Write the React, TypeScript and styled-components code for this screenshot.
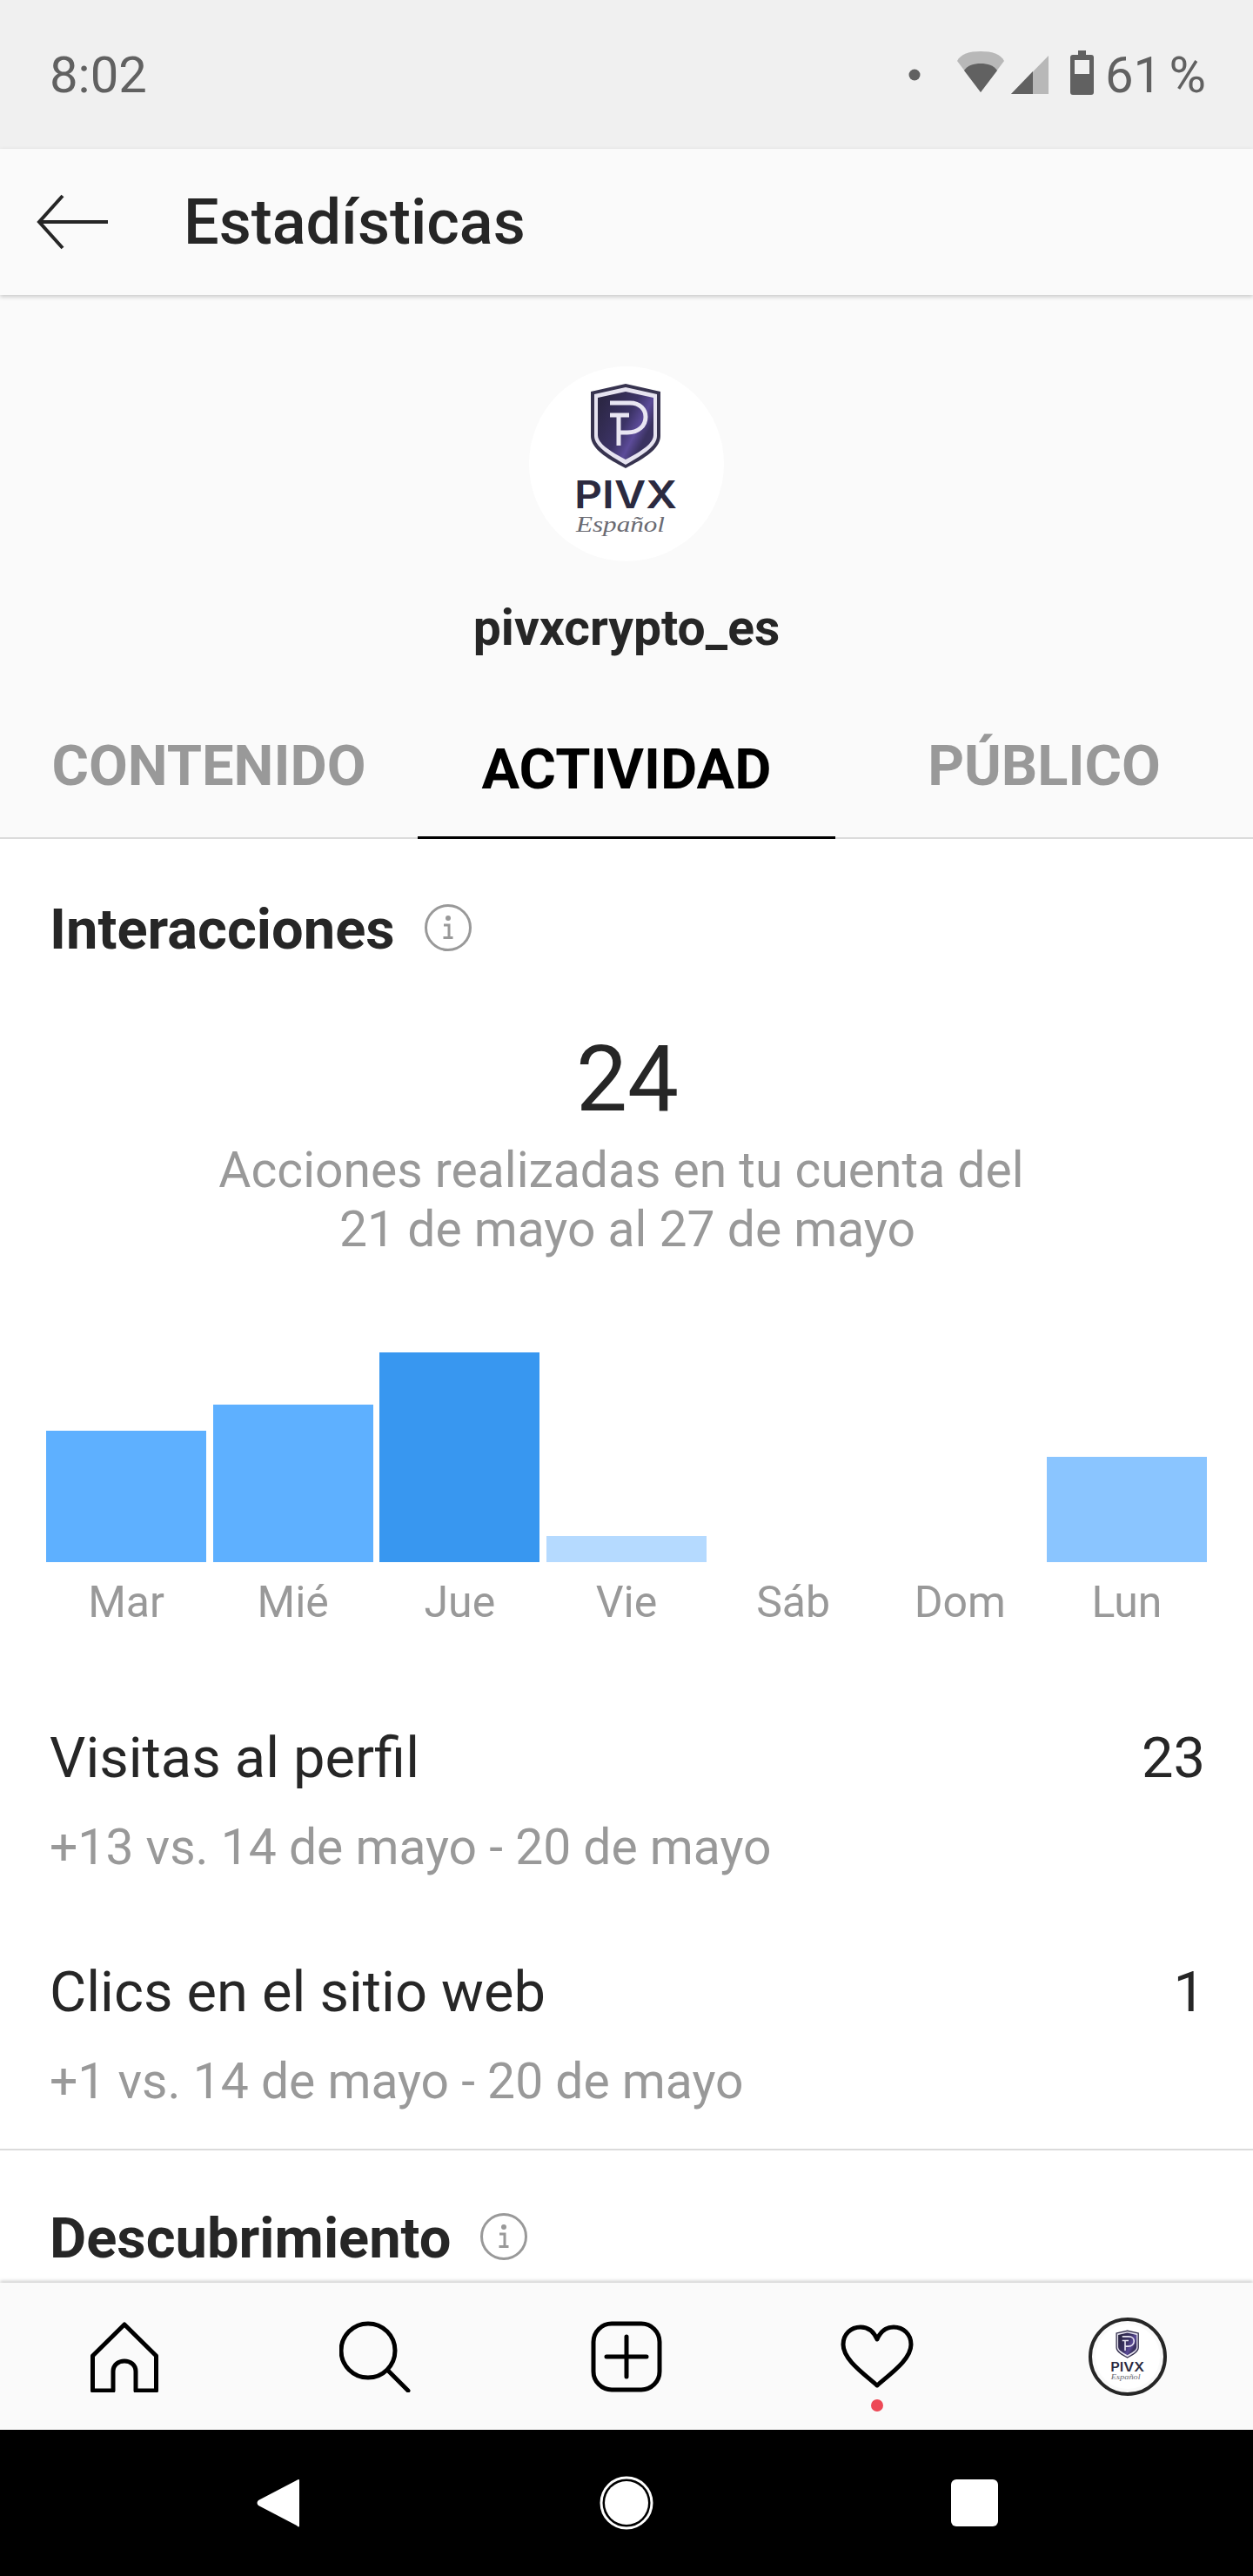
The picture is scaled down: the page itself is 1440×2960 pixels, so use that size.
import styled, { createGlobalStyle } from "styled-components";

const GlobalStyle = createGlobalStyle`
  html, body {
    margin: 0;
    padding: 0;
    background: #fff;
  }
  * {
    box-sizing: border-box;
  }
`;

const Screen = styled.div`
  width: 1440px;
  height: 2960px;
  display: flex;
  flex-direction: column;
  overflow: hidden;
  font-family: Roboto, "Liberation Sans", sans-serif;
  color: #262626;
`;

const StatusBar = styled.div`
  height: 171px;
  flex: none;
  background: #f0f0f0;
  display: flex;
  align-items: center;
  justify-content: space-between;
  padding: 0 54px 0 57px;
  color: #616161;
  font-size: 58px;
`;

const StatusRight = styled.div`
  display: flex;
  align-items: center;
  gap: 11px;
  word-spacing: -6px;
`;

const Toolbar = styled.div`
  height: 168px;
  flex: none;
  background: #fafafa;
  display: flex;
  align-items: center;
  padding-left: 42px;
  gap: 86px;
  box-shadow: 0 2px 5px rgba(0, 0, 0, 0.2);
  position: relative;
  font-size: 72px;
  font-weight: 500;
`;

const Body = styled.div`
  flex: 1;
  min-height: 0;
  overflow: hidden;
`;

const Profile = styled.div`
  background: #fafafa;
  border-bottom: 2px solid #dbdbdb;
  display: flex;
  flex-direction: column;
  align-items: center;
  padding-top: 82px;
`;

const Avatar = styled.div`
  width: 224px;
  height: 224px;
  border-radius: 50%;
  background: #fff;
  overflow: hidden;
`;

const Username = styled.div`
  font-size: 57px;
  font-weight: 700;
  line-height: 66px;
  margin-top: 44px;
`;

const Tabs = styled.div`
  align-self: stretch;
  display: grid;
  grid-template-columns: repeat(3, 480px);
  margin-top: 73px;
  margin-bottom: -2px;
`;

const Tab = styled.div<{ $active?: boolean }>`
  height: 136px;
  display: flex;
  justify-content: center;
  padding-top: ${(p) => (p.$active ? 19 : 15)}px;
  font-size: 65px;
  line-height: 75px;
  font-weight: 700;
  color: ${(p) => (p.$active ? "#000" : "#999")};
  border-bottom: 3px solid ${(p) => (p.$active ? "#000" : "transparent")};
`;

const Section = styled.div<{ $bottom?: number }>`
  background: #fff;
  padding: 0 55px ${(p) => p.$bottom ?? 0}px 57px;
`;

const SectionHead = styled.div<{ $top: number }>`
  display: flex;
  align-items: center;
  gap: 33px;
  padding-top: ${(p) => p.$top}px;
  font-size: 65px;
  line-height: 72px;
  font-weight: 700;

  svg {
    margin-top: -4px;
  }
`;

const Total = styled.div`
  margin-top: 78px;
  text-align: center;
  font-size: 105px;
  line-height: 117px;
`;

const Caption = styled.div`
  margin-top: 12px;
  text-align: center;
  font-size: 57px;
  line-height: 68px;
  color: #999;
`;

const Chart = styled.div`
  margin: 107px -2px 0 -4px;
  display: grid;
  grid-template-columns: repeat(7, 1fr);
  column-gap: 7.6px;
`;

const BarSlot = styled.div`
  height: 241px;
  display: flex;
  align-items: flex-end;
`;

const Bar = styled.div<{ $height: number; $color: string }>`
  width: 100%;
  height: ${(p) => p.$height}px;
  background: ${(p) => p.$color};
`;

const DayLabel = styled.div`
  margin-top: 18px;
  text-align: center;
  font-size: 50px;
  line-height: 56px;
  color: #999;
`;

const StatRows = styled.div`
  margin-top: 115px;
`;

const StatBlock = styled.div`
  & + & {
    margin-top: 97px;
  }
`;

const StatRow = styled.div`
  display: flex;
  justify-content: space-between;
  font-size: 65px;
  line-height: 72px;
  color: #262626;
`;

const StatNote = styled.div`
  margin-top: 34px;
  font-size: 57px;
  line-height: 66px;
  color: #999;
`;

const Divider = styled.div`
  height: 2px;
  background: #dbdbdb;
`;

const BottomNav = styled.div`
  height: 169px;
  flex: none;
  background: #fafafa;
  position: relative;
  box-shadow: 0 -2px 4px rgba(0, 0, 0, 0.2);
  display: grid;
  grid-template-columns: 286px 289px 289px 288px 288px;
  align-items: center;
  justify-items: center;
`;

const NavItem = styled.div`
  position: relative;
  display: flex;
  align-items: center;
  justify-content: center;
`;

const RedDot = styled.span`
  position: absolute;
  left: 50%;
  bottom: -26px;
  width: 14px;
  height: 14px;
  margin-left: -7px;
  border-radius: 50%;
  background: #ed4956;
`;

const NavAvatar = styled.div`
  width: 90px;
  height: 90px;
  border-radius: 50%;
  border: 4px solid #262626;
  padding: 4px;
  background: #fafafa;
`;

const NavAvatarInner = styled.div`
  width: 100%;
  height: 100%;
  border-radius: 50%;
  background: #fff;
  overflow: hidden;
`;

const SystemBar = styled.div`
  height: 168px;
  flex: none;
  background: #000;
  display: grid;
  grid-template-columns: repeat(3, 400px);
  justify-content: center;
  align-items: center;
  justify-items: center;
`;

const SysSquare = styled.div`
  width: 54px;
  height: 54px;
  border-radius: 6px;
  background: #fff;
`;

const Logo = () => (
  <svg width="100%" height="100%" viewBox="0 0 224 224" style={{ display: "block" }}>
    <defs>
      <linearGradient id="shieldFill" x1="0.1" y1="0.1" x2="0.9" y2="0.6">
        <stop offset="0" stopColor="#2c2745" />
        <stop offset="0.55" stopColor="#3c3366" />
        <stop offset="0.8" stopColor="#5c4b99" />
        <stop offset="1" stopColor="#3a3260" />
      </linearGradient>
    </defs>
    <path d="M111 20 L151 29 V80 C151 96 128 108 111 117 C94 108 71 96 71 80 V29 Z" fill="#37334f" />
    <path d="M111 24 L147 32 V80 C147 93 126 104 111 113 C96 104 75 93 75 80 V32 Z" fill="#e6e3f0" />
    <path d="M111 29 L143 36 V79 C143 90 124 100 111 107 C98 100 79 90 79 79 V36 Z" fill="url(#shieldFill)" />
    <path
      d="M93 42 H116 C128 42 134 50 134 58 C134 68 126 76 113 76 H103 M103 58 V91 M93 56 H115"
      fill="none"
      stroke="#e9e6f2"
      strokeWidth="5"
    />
    <text
      x="52"
      y="163"
      fontFamily="Inter, sans-serif"
      fontWeight="600"
      fontSize="44"
      textLength="118"
      lengthAdjust="spacingAndGlyphs"
      fill="#2b2a40"
    >
      PIVX
    </text>
    <text
      x="54"
      y="190"
      fontFamily="'Liberation Serif', serif"
      fontStyle="italic"
      fontSize="26"
      textLength="102"
      lengthAdjust="spacingAndGlyphs"
      fill="#6a6a72"
    >
      Español
    </text>
  </svg>
);

const InfoIcon = () => (
  <svg width="56" height="56" viewBox="0 0 56 56">
    <circle cx="28" cy="28" r="25.5" fill="none" stroke="#999" strokeWidth="3" />
    <circle cx="28" cy="17" r="3" fill="#999" />
    <path d="M23 25 H29 V39 M22.5 39.5 H33.5" fill="none" stroke="#999" strokeWidth="3" />
  </svg>
);

const bars = [
  { day: "Mar", height: 151, color: "#5eb0ff" },
  { day: "Mié", height: 181, color: "#5eb0ff" },
  { day: "Jue", height: 241, color: "#3897f0" },
  { day: "Vie", height: 30, color: "#b5daff" },
  { day: "Sáb", height: 0, color: "transparent" },
  { day: "Dom", height: 0, color: "transparent" },
  { day: "Lun", height: 121, color: "#8ac5ff" },
];

export default function App() {
  return (
    <>
      <GlobalStyle />
      <Screen>
        <StatusBar>
          <span>8:02</span>
          <StatusRight>
            <svg width="215" height="60" viewBox="0 0 215 60">
              <circle cx="7" cy="30" r="6.5" fill="#616161" />
              <path d="M56 14 C60 6 70 3 83 3 C96 3 106 6 110 14 L83 50 Z" fill="#b8b8b8" />
              <path d="M64 25 C68 19 75 17 83 17 C91 17 98 19 102 25 L83 50 Z" fill="#616161" />
              <path d="M118 52 L161 8 V52 Z" fill="#b8b8b8" />
              <path d="M118 52 L143 26 V52 Z" fill="#616161" />
              <path d="M195 2 H204 V7 H210 Q213 7 213 10 V50 Q213 53 210 53 H189 Q186 53 186 50 V10 Q186 7 189 7 H195 Z" fill="#616161" />
              <rect x="191" y="13" width="17" height="16" fill="#f0f0f0" />
            </svg>
            <span>61 %</span>
          </StatusRight>
        </StatusBar>
        <Toolbar>
          <svg width="83" height="64" viewBox="0 0 83 64">
            <path d="M30 2 L3 32 L30 62 M3 32 H82" fill="none" stroke="#262626" strokeWidth="4" />
          </svg>
          <span>Estadísticas</span>
        </Toolbar>
        <Body>
          <Profile>
            <Avatar>
              <Logo />
            </Avatar>
            <Username>pivxcrypto_es</Username>
            <Tabs>
              <Tab>CONTENIDO</Tab>
              <Tab $active>ACTIVIDAD</Tab>
              <Tab>PÚBLICO</Tab>
            </Tabs>
          </Profile>
          <Section $bottom={44}>
            <SectionHead $top={68}>
              Interacciones
              <InfoIcon />
            </SectionHead>
            <Total>24</Total>
            <Caption>
              Acciones realizadas en tu cuenta del{"\u00a0"}
              <br />
              21 de mayo al 27 de mayo
            </Caption>
            <Chart>
              {bars.map((b) => (
                <BarSlot key={b.day}>
                  <Bar $height={b.height} $color={b.color} />
                </BarSlot>
              ))}
              {bars.map((b) => (
                <DayLabel key={b.day}>{b.day}</DayLabel>
              ))}
            </Chart>
            <StatRows>
              <StatBlock>
                <StatRow>
                  <span>Visitas al perfil</span>
                  <span>23</span>
                </StatRow>
                <StatNote>+13 vs. 14 de mayo - 20 de mayo</StatNote>
              </StatBlock>
              <StatBlock>
                <StatRow>
                  <span>Clics en el sitio web</span>
                  <span>1</span>
                </StatRow>
                <StatNote>+1 vs. 14 de mayo - 20 de mayo</StatNote>
              </StatBlock>
            </StatRows>
          </Section>
          <Divider />
          <Section>
            <SectionHead $top={65}>
              Descubrimiento
              <InfoIcon />
            </SectionHead>
          </Section>
        </Body>
        <BottomNav>
          <NavItem>
            <svg width="78" height="82" viewBox="0 0 78 82">
              <path d="M2.5 80 V40 L39 4 L75.5 40 V80 H52 V58 C52 42 26 42 26 58 V80 Z" fill="none" stroke="#000" strokeWidth="5" strokeLinejoin="round" />
            </svg>
          </NavItem>
          <NavItem>
            <svg width="82" height="82" viewBox="0 0 82 82">
              <circle cx="33" cy="34" r="31" fill="none" stroke="#000" strokeWidth="5" />
              <path d="M56 57 L79 80" stroke="#000" strokeWidth="5" strokeLinecap="round" />
            </svg>
          </NavItem>
          <NavItem>
            <svg width="82" height="82" viewBox="0 0 82 82">
              <rect x="3" y="3" width="76" height="76" rx="21" fill="none" stroke="#000" strokeWidth="5" />
              <path d="M41 18 V64 M18 41 H64" stroke="#000" strokeWidth="5" strokeLinecap="round" />
            </svg>
          </NavItem>
          <NavItem>
            <svg width="84" height="74" viewBox="0 0 84 74">
              <path d="M42 70 C26 56 3 40 3 23 C3 11 12 3 23 3 C32 3 38 8 42 17 C46 8 52 3 61 3 C72 3 81 11 81 23 C81 40 58 56 42 70 Z" fill="none" stroke="#000" strokeWidth="5" strokeLinejoin="round" />
            </svg>
            <RedDot />
          </NavItem>
          <NavItem>
            <NavAvatar>
              <NavAvatarInner>
                <Logo />
              </NavAvatarInner>
            </NavAvatar>
          </NavItem>
        </BottomNav>
        <SystemBar>
          <svg width="50" height="56" viewBox="0 0 50 56">
            <path d="M49 2 V54 Q49 57 46 54 L2 31 Q-1 28 2 25 L46 2 Q49 0 49 2 Z" fill="#fff" />
          </svg>
          <svg width="62" height="62" viewBox="0 0 62 62">
            <circle cx="31" cy="31" r="29" fill="none" stroke="#fff" strokeWidth="3" />
            <circle cx="31" cy="31" r="25" fill="#fff" />
          </svg>
          <SysSquare />
        </SystemBar>
      </Screen>
    </>
  );
}
